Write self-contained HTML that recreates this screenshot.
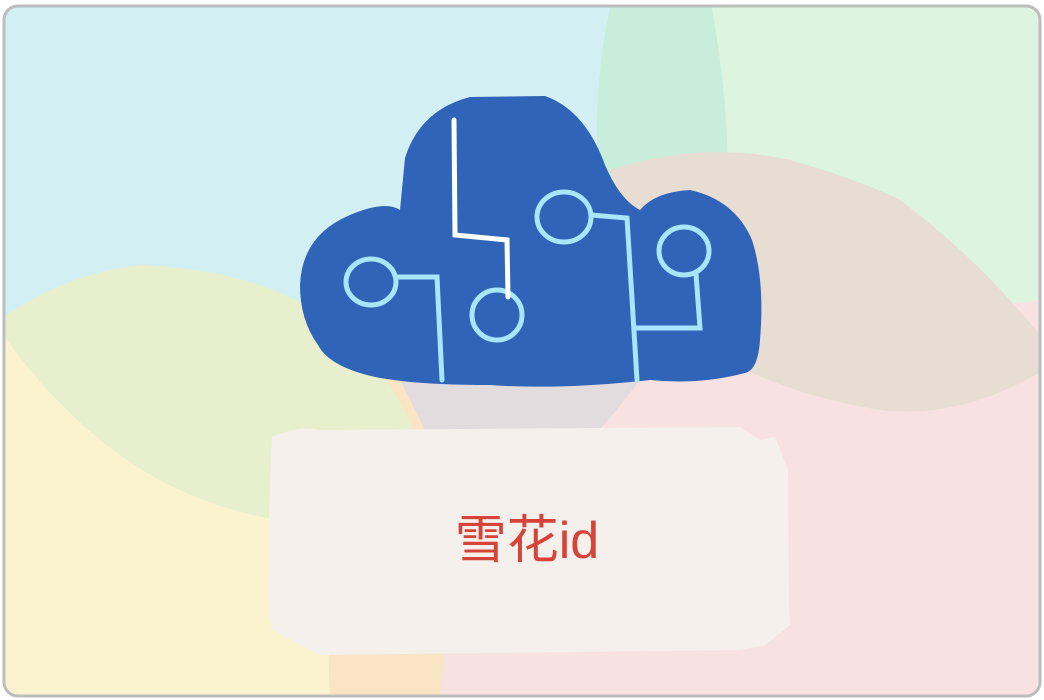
<!DOCTYPE html>
<html><head><meta charset="utf-8"><style>
html,body{margin:0;padding:0;width:1044px;height:700px;overflow:hidden;background:#fff}
</style></head><body>
<svg width="1044" height="700" viewBox="0 0 1044 700" xmlns="http://www.w3.org/2000/svg">
<defs><clipPath id="c"><rect x="4" y="6" width="1036" height="690" rx="14"/></clipPath></defs>
<g clip-path="url(#c)">
<rect x="0" y="0" width="1044" height="700" fill="#d2f0f4"/>
<rect x="640" y="0" width="404" height="400" fill="#ddf5de"/>
<path d="M0 320 L0 700 L360 700 L360 380 Z" fill="#fbf3d0"/>
<path d="M360 380 L1044 300 L1044 700 L430 700 Z" fill="#f8e2e1"/>
<path d="M330 700 Q320 520 380 380 L470 350 L440 700 Z" fill="#f9e5c3"/>
<path d="M0 320 Q60 275 140 265 Q260 270 330 320 Q420 400 420 470 Q380 530 280 520 Q180 505 100 440 Q40 390 0 330 Z" fill="#e8efcd"/>
<path d="M612 0 Q590 90 600 200 Q620 320 640 360 L720 300 Q740 150 710 0 Z" fill="#c8eedb"/>
<path d="M610 170 Q700 140 790 160 Q860 180 900 200 Q980 260 1044 340 L1044 370 Q960 420 880 410 Q760 390 700 340 Q640 280 610 170 Z" fill="#e7ddd3"/>
<path d="M400 380 L640 380 Q610 420 590 440 L430 440 Z" fill="#e3dcdf"/>
</g>
<rect x="4" y="6" width="1036" height="690" rx="14" fill="none" stroke="#bdbdbd" stroke-width="3"/>
<path d="M405 158 Q420 110 470 97 L545 96 Q585 110 605 165 Q620 200 640 210 Q655 192 690 190 Q735 200 752 240 Q765 280 760 340 Q758 370 745 373 Q700 385 650 380 Q560 390 490 385 Q420 385 380 378 Q330 368 318 345 Q300 320 300 285 Q302 235 350 215 Q385 200 400 210 Z" fill="#3064b8"/>
<g fill="none" stroke="#a8e6fa" stroke-width="5" stroke-linecap="round">
<ellipse cx="371" cy="282" rx="25" ry="23"/>
<path d="M396 277 L437 277 L442 380"/>
<ellipse cx="497" cy="315" rx="25" ry="25"/>
<ellipse cx="564" cy="217" rx="27" ry="25"/>
<path d="M591 215 L627 218 L637 380 M636 328 L700 328 L696 274"/>
<ellipse cx="684" cy="251" rx="25" ry="24"/>
</g>
<path d="M454 120 L455 235 L507 240 L508 297" fill="none" stroke="#fff" stroke-width="5" stroke-linecap="round"/>
<path d="M272 437 Q300 425 320 430 L740 427 L760 440 L775 437 L788 470 L789 605 L790 625 L765 645 L740 650 L320 655 L272 630 L268 600 L270 480 Z" fill="#f5f0ec"/>
<text x="527" y="558" text-anchor="middle" font-family="'Liberation Sans','Noto Sans CJK SC',sans-serif" font-size="52" fill="#d64339">雪花id</text>
</svg>
</body></html>
